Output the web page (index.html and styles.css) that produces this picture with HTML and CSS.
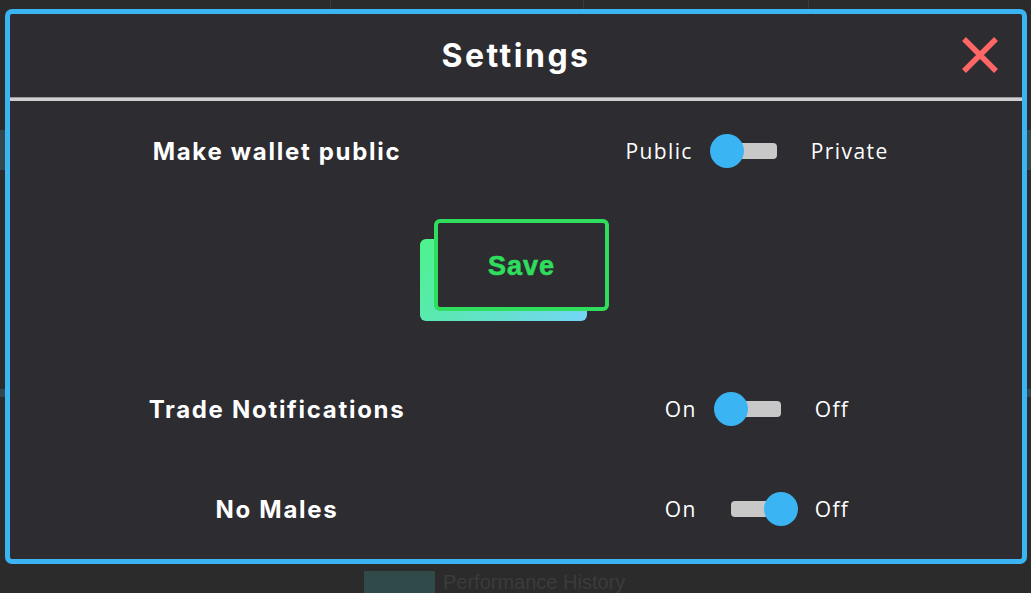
FILE: index.html
```html
<!DOCTYPE html>
<html lang="en">
<head>
  <meta charset="UTF-8" />
  <meta name="viewport" content="width=device-width, initial-scale=1.0" />
  <title>Settings</title>
  <link rel="stylesheet" href="styles.css">
</head>
<body>
  <div class="page">
    <div class="table-head">
      <span class="cell cell-a"></span>
      <span class="cell"></span>
      <span class="cell"></span>
      <span class="cell"></span>
    </div>
    <div class="band band-one"></div>
    <div class="band band-two"></div>
    <div class="history">
      <span class="history-swatch"></span>
      <span class="history-label">Performance History</span>
    </div>
  </div>

  <div class="modal">
    <div class="modal-header">
      <h1>Settings</h1>
      <button class="close" aria-label="Close">
        <svg width="40" height="40" viewBox="0 0 40 40">
          <path d="M4 4 L36 36 M36 4 L4 36" stroke="#ff6666" stroke-width="5.5" fill="none"/>
        </svg>
      </button>
    </div>
    <div class="divider"></div>

    <div class="modal-body">
      <div class="row row-wallet">
        <span class="row-label">Make wallet public</span>
        <div class="switch-group">
          <span>Public</span>
          <span class="switch"><span class="knob"></span></span>
          <span>Private</span>
        </div>
      </div>

      <div class="save-wrap">
        <button class="save">Save</button>
      </div>

      <div class="row row-trade">
        <span class="row-label">Trade Notifications</span>
        <div class="switch-group">
          <span>On</span>
          <span class="switch"><span class="knob"></span></span>
          <span>Off</span>
        </div>
      </div>

      <div class="row row-males">
        <span class="row-label">No Males</span>
        <div class="switch-group">
          <span>On</span>
          <span class="switch on"><span class="knob"></span></span>
          <span>Off</span>
        </div>
      </div>
    </div>
  </div>
</body>
</html>
```

FILE: styles.css
```css
body {
  margin: 0;
  background-color: #2b2b2b;
  font-family: 'Open Sans', sans-serif;
  color: #fff;
  overflow: hidden;
}

.page {
  height: 593px;
  display: flex;
  flex-direction: column;
}

.table-head {
  display: grid;
  grid-template-columns: 330px 253px 225px 223px;
  height: 10px;
}

.table-head .cell {
  border-left: 1px solid #3a3a3a;
}

.table-head .cell-a {
  border-left: none;
}

.band {
  background-color: #33474e;
}

.band-one {
  height: 40px;
  margin-top: 120px;
}

.band-two {
  height: 8px;
  margin-top: 219px;
}

.history {
  margin-top: auto;
  display: flex;
  align-items: center;
  gap: 8px;
  padding-left: 364px;
  height: 22px;
}

.history-swatch {
  width: 71px;
  height: 22px;
  background-color: #2f4a48;
}

.history-label {
  color: #3b3b3b;
  font-family: 'Liberation Sans', sans-serif;
  font-size: 20px;
}

/* modal */
.modal {
  position: fixed;
  top: 9px;
  left: 5px;
  width: 1012px;
  height: 545px;
  background-color: #2d2c31;
  border: 5px solid #3ab4f2;
  border-radius: 7px;
  display: flex;
  flex-direction: column;
}

.modal-header {
  height: 83px;
  display: flex;
  align-items: center;
  justify-content: center;
  position: relative;
}

.modal-header h1 {
  margin: 0;
  font-family: 'Inter', sans-serif;
  font-size: 32px;
  font-weight: 700;
  letter-spacing: 2.5px;
}

.close {
  position: absolute;
  right: 22px;
  top: 21px;
  background: none;
  border: none;
  padding: 0;
  width: 40px;
  height: 40px;
  cursor: pointer;
}

.divider {
  height: 4px;
  background-color: #cfcfcf;
  border-top: 1px solid #9a9a9a;
  box-sizing: border-box;
}

.modal-body {
  display: flex;
  flex-direction: column;
  padding-top: 30px;
}

.row {
  display: grid;
  grid-template-columns: 534px 426px;
  align-items: center;
  height: 40px;
}

.row-label {
  text-align: center;
  font-family: 'Inter', sans-serif;
  font-weight: 700;
  font-size: 24px;
  letter-spacing: 1.7px;
}

.switch-group {
  display: flex;
  justify-content: center;
  align-items: center;
  gap: 17px;
  font-size: 21px;
  letter-spacing: 1.4px;
}

.switch {
  position: relative;
  width: 84px;
  height: 34px;
}

.switch::before {
  content: "";
  position: absolute;
  left: 17px;
  right: 17px;
  top: 9px;
  height: 16px;
  background-color: #c8c8c8;
  border-radius: 4px;
}

.knob {
  position: absolute;
  left: 0;
  top: 0;
  width: 34px;
  height: 34px;
  border-radius: 50%;
  background-color: #3ab4f2;
}

.switch.on .knob {
  left: 50px;
}

.save-wrap {
  position: relative;
  margin-top: 48px;
  margin-left: 410px;
  width: 189px;
  height: 102px;
}

.save-wrap::before {
  content: "";
  position: absolute;
  left: 0;
  top: 20px;
  width: 167px;
  height: 82px;
  border-radius: 6px;
  background: linear-gradient(135deg, #4cf48a, #74d5f7);
}

.save {
  position: absolute;
  left: 14px;
  top: 0;
  width: 175px;
  height: 92px;
  padding: 0;
  padding-top: 2px;
  background-color: #2d2c31;
  border: 4px solid #2ede5c;
  border-radius: 6px;
  color: #2ede5c;
  font-family: 'Liberation Sans', sans-serif;
  font-weight: bold;
  font-size: 27px;
  letter-spacing: 1px;
  -webkit-text-stroke: 0.6px #2ede5c;
  cursor: pointer;
}

.row-trade {
  margin-top: 68px;
}

.row-males {
  margin-top: 60px;
}
```
